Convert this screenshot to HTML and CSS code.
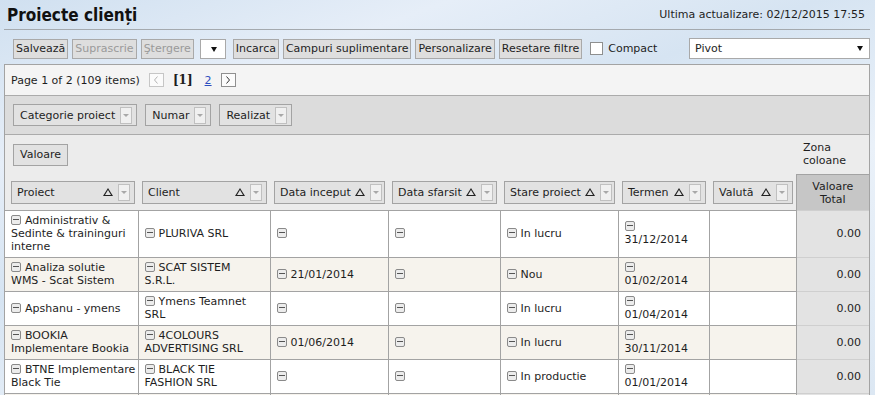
FILE: index.html
```html
<!DOCTYPE html>
<html lang="ro">
<head>
    <meta charset="UTF-8">
    <title>Proiecte clienți</title>
    <link rel="stylesheet" href="styles.css">
</head>
<body>
    <div class="page">
        <div class="title-bar">
            <h1>Proiecte clienți</h1>
            <span class="updated">Ultima actualizare: 02/12/2015 17:55</span>
        </div>

        <div class="toolbar">
            <button class="btn">Salvează</button>
            <button class="btn" disabled>Suprascrie</button>
            <button class="btn" disabled>Ştergere</button>
            <span class="mini-select"><span class="arrow"></span></span>
            <button class="btn">Incarca</button>
            <button class="btn">Campuri suplimentare</button>
            <button class="btn">Personalizare</button>
            <button class="btn">Resetare filtre</button>
            <label class="check"><span class="box"></span>Compact</label>
            <span class="view-select">Pivot<span class="arrow"></span></span>
        </div>

        <div class="pivot">
            <div class="pager">
                <span>Page 1 of 2 (109 items)</span>
                <span class="nav disabled">
                    <svg width="6" height="8" viewBox="0 0 6 8"><polyline points="4.5,0.5 1.5,4 4.5,7.5" fill="none" stroke="currentColor" stroke-width="1"/></svg>
                </span>
                <b class="current">[1]</b>
                <a href="#" class="page-link">2</a>
                <span class="nav">
                    <svg width="6" height="8" viewBox="0 0 6 8"><polyline points="1.5,0.5 4.5,4 1.5,7.5" fill="none" stroke="currentColor" stroke-width="1"/></svg>
                </span>
            </div>

            <div class="filter-area">
                <span class="field">Categorie proiect<span class="drop"></span></span>
                <span class="field">Numar<span class="drop"></span></span>
                <span class="field">Realizat<span class="drop"></span></span>
            </div>

            <table class="grid">
                <colgroup>
                    <col style="width: 133px">
                    <col style="width: 132px">
                    <col style="width: 118px">
                    <col style="width: 112px">
                    <col style="width: 118px">
                    <col style="width: 91px">
                    <col style="width: 87px">
                    <col>
                </colgroup>
                <thead>
                    <tr class="data-zone">
                        <td colspan="7"><span class="field plain">Valoare</span></td>
                        <td class="zone-label"><span>Zona<br>coloane</span></td>
                    </tr>
                    <tr class="row-fields">
                        <th><span class="field"><span class="label">Proiect</span><span class="sort"></span><span class="drop"></span></span></th>
                        <th><span class="field"><span class="label">Client</span><span class="sort"></span><span class="drop"></span></span></th>
                        <th><span class="field"><span class="label">Data inceput</span><span class="sort"></span><span class="drop"></span></span></th>
                        <th><span class="field"><span class="label">Data sfarsit</span><span class="sort"></span><span class="drop"></span></span></th>
                        <th><span class="field"><span class="label">Stare proiect</span><span class="sort"></span><span class="drop"></span></span></th>
                        <th><span class="field"><span class="label">Termen</span><span class="sort"></span><span class="drop"></span></span></th>
                        <th><span class="field"><span class="label">Valută</span><span class="sort"></span><span class="drop"></span></span></th>
                        <th class="total-head">Valoare<br>Total</th>
                    </tr>
                </thead>
                <tbody>
                    <tr>
                        <td><i class="fold"></i>Administrativ &amp; Sedinte &amp; traininguri interne</td>
                        <td><i class="fold"></i>PLURIVA SRL</td>
                        <td><i class="fold"></i></td>
                        <td><i class="fold"></i></td>
                        <td><i class="fold"></i>In lucru</td>
                        <td class="stacked"><i class="fold"></i>31/12/2014</td>
                        <td></td>
                        <td class="total">0.00</td>
                    </tr>
                    <tr class="alt">
                        <td><i class="fold"></i>Analiza solutie WMS - Scat Sistem</td>
                        <td><i class="fold"></i>SCAT SISTEM S.R.L.</td>
                        <td><i class="fold"></i>21/01/2014</td>
                        <td><i class="fold"></i></td>
                        <td><i class="fold"></i>Nou</td>
                        <td class="stacked"><i class="fold"></i>01/02/2014</td>
                        <td></td>
                        <td class="total">0.00</td>
                    </tr>
                    <tr>
                        <td><i class="fold"></i>Apshanu - ymens</td>
                        <td><i class="fold"></i>Ymens Teamnet SRL</td>
                        <td><i class="fold"></i></td>
                        <td><i class="fold"></i></td>
                        <td><i class="fold"></i>In lucru</td>
                        <td class="stacked"><i class="fold"></i>01/04/2014</td>
                        <td></td>
                        <td class="total">0.00</td>
                    </tr>
                    <tr class="alt">
                        <td><i class="fold"></i>BOOKIA Implementare Bookia</td>
                        <td><i class="fold"></i>4COLOURS ADVERTISING SRL</td>
                        <td><i class="fold"></i>01/06/2014</td>
                        <td><i class="fold"></i></td>
                        <td><i class="fold"></i>In lucru</td>
                        <td class="stacked"><i class="fold"></i>30/11/2014</td>
                        <td></td>
                        <td class="total">0.00</td>
                    </tr>
                    <tr>
                        <td><i class="fold"></i>BTNE Implementare Black Tie</td>
                        <td><i class="fold"></i>BLACK TIE FASHION SRL</td>
                        <td><i class="fold"></i></td>
                        <td><i class="fold"></i></td>
                        <td><i class="fold"></i>In productie</td>
                        <td class="stacked"><i class="fold"></i>01/01/2014</td>
                        <td></td>
                        <td class="total">0.00</td>
                    </tr>
                    <tr class="alt empty">
                        <td></td>
                        <td></td>
                        <td></td>
                        <td></td>
                        <td></td>
                        <td></td>
                        <td></td>
                        <td class="total"></td>
                    </tr>
                </tbody>
            </table>
        </div>
    </div>
</body>
</html>
```

FILE: styles.css
```css
body {
    margin: 0;
    font-family: "DejaVu Sans", Verdana, sans-serif;
    font-size: 11px;
    color: #1e1e1e;
    background: linear-gradient(160deg, #d0e0f0 0%, #e6eef8 22%, #d6e4f2 40%, #eaf1f9 62%, #dae6f2 100%);
    min-height: 395px;
    overflow: hidden;
}

.page {
    padding: 0 5px 0 4px;
}

/* Title */
.title-bar {
    display: flex;
    justify-content: space-between;
    align-items: center;
    height: 29px;
    border-bottom: 1px solid #a4a9ae;
}

h1 {
    margin: 0 0 0 3px;
    font-family: "DejaVu Sans Condensed", "DejaVu Sans", sans-serif;
    font-size: 17px;
    font-weight: bold;
    color: #111;
}

.updated {
    margin-right: 5px;
    font-size: 11px;
}

/* Toolbar */
.toolbar {
    display: flex;
    align-items: center;
    gap: 4px;
    padding: 8px 0 5px 9px;
}

.btn {
    height: 20px;
    padding: 0 2px;
    font-family: inherit;
    font-size: 11px;
    color: #1e1e1e;
    background-color: #dedede;
    border: 1px solid #a9a9a9;
    border-radius: 0;
}

.btn:disabled {
    color: #9a9a9a;
}

.mini-select {
    position: relative;
    width: 24px;
    height: 18px;
    margin: 0 3px 0 2px;
    background-color: #fff;
    border: 1px solid #a9a9a9;
}

.arrow {
    position: absolute;
    top: 7px;
    right: 8px;
    width: 0;
    height: 0;
    border-left: 3px solid transparent;
    border-right: 3px solid transparent;
    border-top: 5px solid #111;
}

.check {
    display: flex;
    align-items: center;
    margin-left: 4px;
}

.box {
    width: 11px;
    height: 11px;
    margin-right: 5px;
    background-color: #fff;
    border: 1px solid #8e8f8f;
}

.view-select {
    position: relative;
    margin-left: auto;
    width: 174px;
    height: 19px;
    line-height: 19px;
    padding-left: 5px;
    background-color: #fff;
    border: 1px solid #a9a9a9;
}

.view-select .arrow {
    right: 6px;
}

/* Pivot panel */
.pivot {
    border: 1px solid #a3a3a3;
    border-bottom: none;
    background-color: #ececec;
}

.pager {
    display: flex;
    align-items: center;
    height: 30px;
    padding-left: 6px;
    background-color: #f4f4f4;
    border-bottom: 1px solid #ababab;
}

.nav {
    display: flex;
    align-items: center;
    justify-content: center;
    width: 13px;
    height: 12px;
    margin-left: 9px;
    color: #333;
    background-color: #fbfbfb;
    border: 1px solid #8f8f8f;
}

.nav.disabled {
    color: #b4b4b4;
    border-color: #c6c6c6;
}

.current {
    margin-left: 9px;
    font-family: "DejaVu Serif", serif;
    font-size: 12px;
}

.page-link {
    margin-left: 12px;
    color: #2c4fc0;
}

.filter-area {
    display: flex;
    align-items: center;
    gap: 8px;
    height: 38px;
    padding-left: 8px;
    background-color: #dcdcdc;
    border-bottom: 1px solid #ababab;
}

.field {
    display: flex;
    align-items: center;
    height: 20px;
    padding: 0 4px 0 6px;
    color: #1e1e1e;
    background-color: #e2e2e2;
    border: 1px solid #a3a3a3;
    white-space: nowrap;
}

.field.plain {
    display: inline-flex;
    padding-right: 6px;
}

.drop {
    position: relative;
    flex-shrink: 0;
    width: 10px;
    height: 15px;
    margin-left: 5px;
    background-color: #f0f0f0;
    border: 1px solid #c0c0c0;
}

.drop::after {
    content: "";
    position: absolute;
    top: 6px;
    left: 2px;
    border-left: 3px solid transparent;
    border-right: 3px solid transparent;
    border-top: 3px solid #a8a8a8;
}

.label {
    margin-right: 4px;
}

.sort {
    position: relative;
    flex-shrink: 0;
    width: 0;
    height: 0;
    margin-left: auto;
    border-left: 5px solid transparent;
    border-right: 5px solid transparent;
    border-bottom: 8px solid #222;
}

.sort::after {
    content: "";
    position: absolute;
    top: 2px;
    left: -3px;
    border-left: 3px solid transparent;
    border-right: 3px solid transparent;
    border-bottom: 5px solid #e2e2e2;
}

/* Grid */
.grid {
    width: 100%;
    table-layout: fixed;
    border-collapse: collapse;
}

.data-zone td {
    height: 39px;
    padding: 0;
    vertical-align: middle;
}

.data-zone td:first-child {
    padding-left: 8px;
}

.data-zone .zone-label {
    padding-left: 7px;
    vertical-align: top;
    line-height: 13px;
}

.zone-label span {
    display: block;
    margin-top: 6px;
}

.row-fields th {
    height: 35px;
    padding: 0 3px 0 4px;
    font-weight: normal;
    text-align: left;
}

.row-fields th:first-child {
    padding-left: 6px;
}

.row-fields .field {
    height: 21px;
    padding-left: 5px;
}

.row-fields th.total-head {
    padding: 0;
    text-align: center;
    line-height: 13px;
    background-color: #c6c6c6;
    border-top: 1px solid #a3a3a3;
    border-left: 1px solid #a3a3a3;
}

tbody td {
    padding: 3px 2px 4px 6px;
    line-height: 13px;
    vertical-align: middle;
    background-color: #fff;
    border: 1px solid #a3a3a3;
    overflow-wrap: break-word;
}

tbody td:first-child {
    border-left: none;
}

tbody td:nth-child(2) {
    padding-right: 14px;
}

tbody tr.alt td {
    background-color: #f6f3ed;
}

tbody tr.empty td {
    height: 26px;
}

tbody td.total,
tbody tr.alt td.total {
    text-align: right;
    padding-right: 8px;
    background-color: #e3e3e3;
    border-right: none;
    border-top-color: #cfcfcf;
    border-bottom-color: #cfcfcf;
}

.fold {
    display: inline-block;
    position: relative;
    width: 8px;
    height: 8px;
    margin-right: 4px;
    vertical-align: -1px;
    background-color: #ececec;
    border: 1px solid #8a8a8a;
    border-radius: 2px;
}

.fold::after {
    content: "";
    position: absolute;
    top: 3px;
    left: 1px;
    width: 6px;
    height: 1px;
    background-color: #555;
}

.stacked .fold {
    display: block;
    margin: 0 0 2px;
}
```
